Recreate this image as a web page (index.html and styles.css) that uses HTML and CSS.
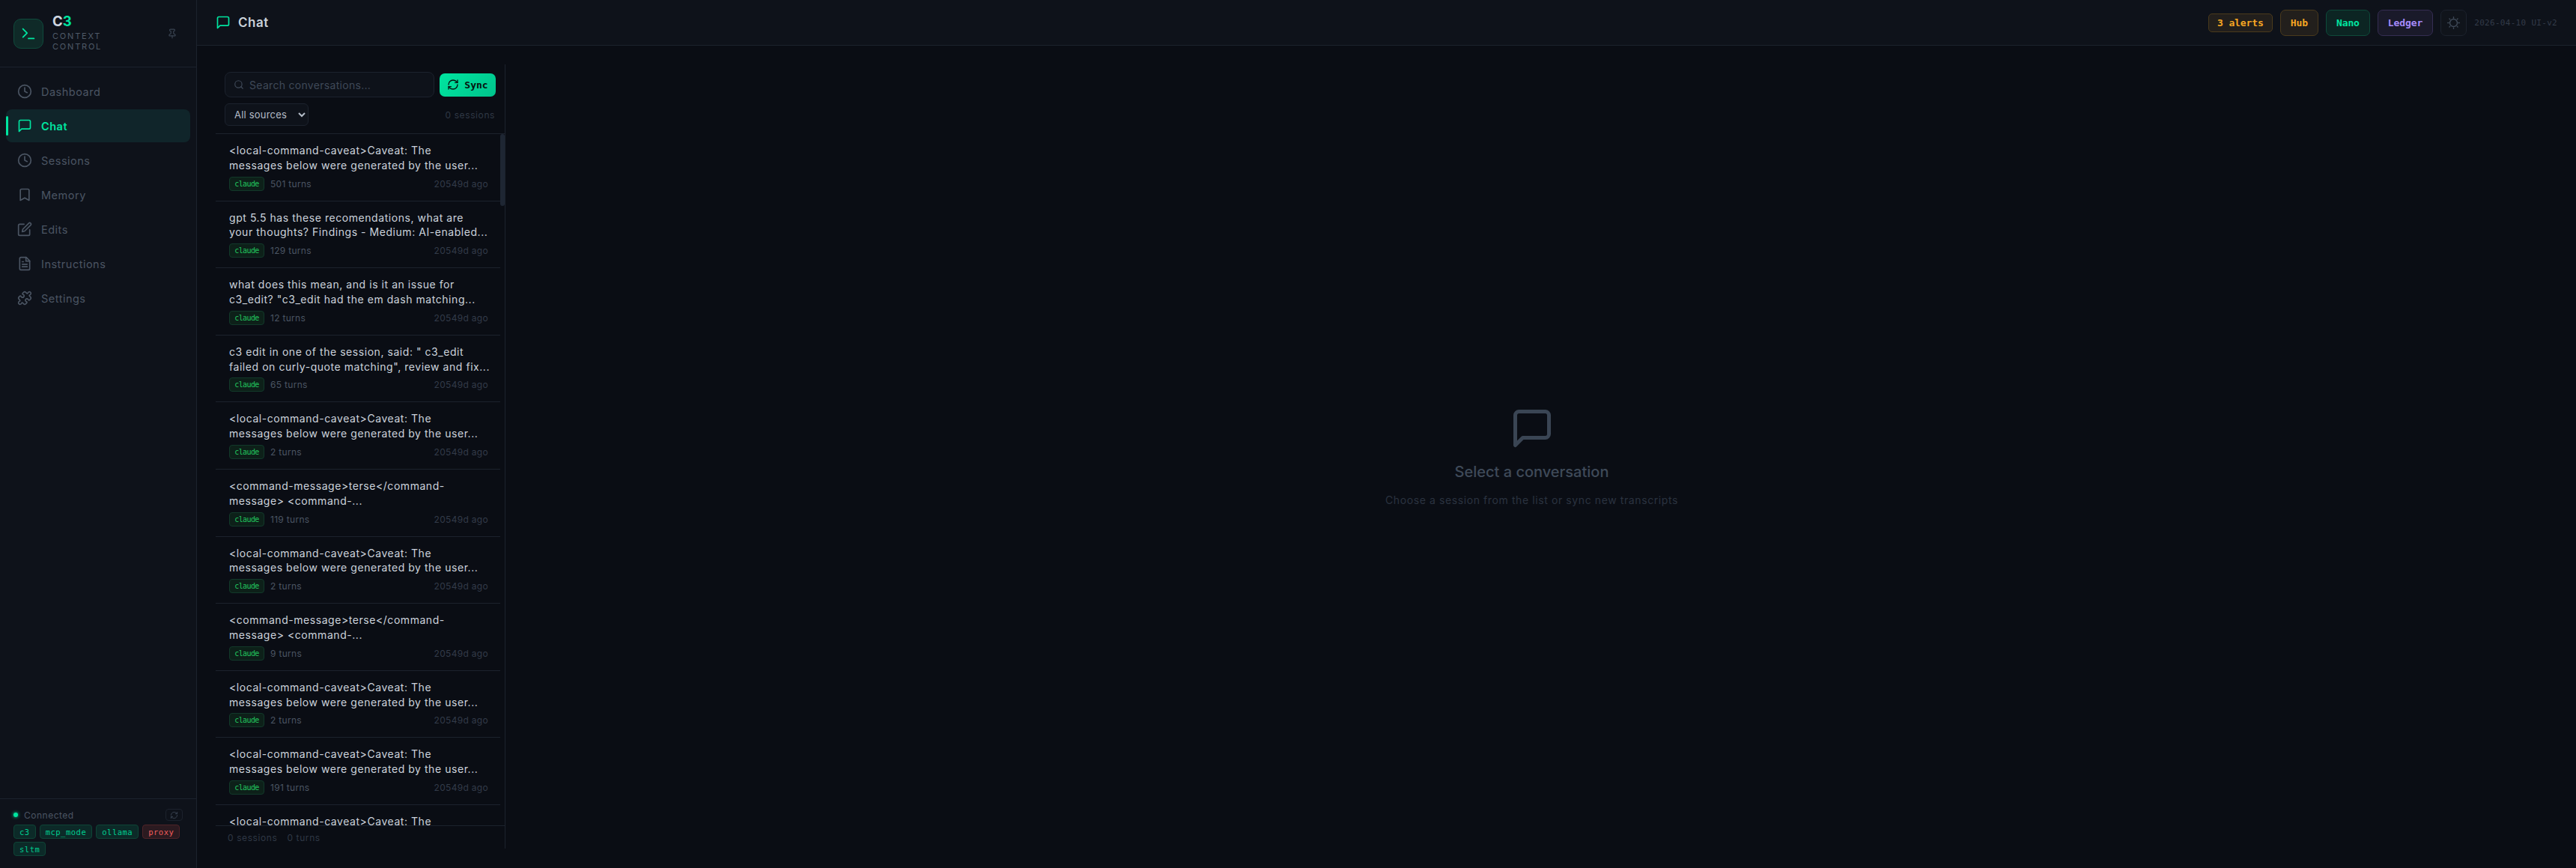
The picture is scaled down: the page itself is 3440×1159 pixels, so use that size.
FILE: index.html
```html
<!DOCTYPE html>
<html lang="en">
<head>
    <meta charset="UTF-8">
    <title>C3 - Chat</title>
    <link rel="stylesheet" href="styles.css">
</head>
<body>
    <svg class="sprite" width="0" height="0">
        <symbol id="i-clock" viewBox="0 0 24 24"><circle cx="12" cy="12" r="10"/><polyline points="12 6 12 12 16 14"/></symbol>
        <symbol id="i-chat" viewBox="0 0 24 24"><path d="M21 15a2 2 0 0 1-2 2H7l-4 4V5a2 2 0 0 1 2-2h14a2 2 0 0 1 2 2z"/></symbol>
        <symbol id="i-bookmark" viewBox="0 0 24 24"><path d="m19 21-7-4-7 4V5a2 2 0 0 1 2-2h10a2 2 0 0 1 2 2v16z"/></symbol>
        <symbol id="i-edit" viewBox="0 0 24 24"><path d="M11 4H4a2 2 0 0 0-2 2v14a2 2 0 0 0 2 2h14a2 2 0 0 0 2-2v-7"/><path d="M18.5 2.5a2.121 2.121 0 0 1 3 3L12 15l-4 1 1-4 9.5-9.5z"/></symbol>
        <symbol id="i-file" viewBox="0 0 24 24"><path d="M14.5 2H6a2 2 0 0 0-2 2v16a2 2 0 0 0 2 2h12a2 2 0 0 0 2-2V7.5L14.5 2z"/><polyline points="14 2 14 8 20 8"/><line x1="16" y1="13" x2="8" y2="13"/><line x1="16" y1="17" x2="8" y2="17"/><line x1="10" y1="9" x2="8" y2="9"/></symbol>
        <symbol id="i-puzzle" viewBox="0 0 24 24"><path d="M19.439 7.85c-.049.322.059.648.289.878l1.568 1.568c.47.47.706 1.087.706 1.704s-.235 1.233-.706 1.704l-1.611 1.611a.98.98 0 0 1-.837.276c-.47-.07-.802-.48-.968-.925a2.501 2.501 0 1 0-3.214 3.214c.446.166.855.497.925.968a.979.979 0 0 1-.276.837l-1.61 1.61a2.404 2.404 0 0 1-1.705.707 2.402 2.402 0 0 1-1.704-.706l-1.568-1.568a1.026 1.026 0 0 0-.877-.29c-.493.074-.84.504-1.02.968a2.5 2.5 0 1 1-3.237-3.237c.464-.18.894-.527.967-1.02a1.026 1.026 0 0 0-.289-.877l-1.568-1.568A2.402 2.402 0 0 1 1.998 12c0-.617.236-1.234.706-1.704L4.23 8.77c.24-.24.581-.353.917-.303.515.077.877.528 1.073 1.01a2.5 2.5 0 1 0 3.259-3.259c-.482-.196-.933-.558-1.01-1.073-.05-.336.062-.676.303-.917l1.525-1.525A2.402 2.402 0 0 1 12 1.998c.617 0 1.234.236 1.704.706l1.568 1.568c.23.23.556.338.877.29.493-.074.84-.504 1.02-.968a2.5 2.5 0 1 1 3.237 3.237c-.464.18-.894.527-.967 1.02Z"/></symbol>
        <symbol id="i-refresh" viewBox="0 0 24 24"><path d="M3 12a9 9 0 0 1 9-9 9.75 9.75 0 0 1 6.74 2.74L21 8"/><path d="M21 3v5h-5"/><path d="M21 12a9 9 0 0 1-9 9 9.75 9.75 0 0 1-6.74-2.74L3 16"/><path d="M8 16H3v5"/></symbol>
        <symbol id="i-search" viewBox="0 0 24 24"><circle cx="11" cy="11" r="8"/><path d="m21 21-4.3-4.3"/></symbol>
    </svg>

    <div class="app">
        <aside class="sidebar">
            <div class="brand">
                <div class="brand-logo">
                    <svg viewBox="0 0 24 24"><polyline points="4 17 10 11 4 5"/><line x1="12" y1="19" x2="20" y2="19"/></svg>
                </div>
                <div class="brand-text">
                    <div class="brand-name">C<span>3</span></div>
                    <div class="brand-sub">CONTEXT CONTROL</div>
                </div>
                <svg class="pin" viewBox="0 0 24 24"><path d="M12 17v5"/><path d="M9 10.76a2 2 0 0 1-1.11 1.79l-1.78.9A2 2 0 0 0 5 15.24V16a1 1 0 0 0 1 1h12a1 1 0 0 0 1-1v-.76a2 2 0 0 0-1.11-1.79l-1.78-.9A2 2 0 0 1 15 10.76V7a1 1 0 0 1 1-1 2 2 0 0 0 0-4H8a2 2 0 0 0 0 4 1 1 0 0 1 1 1z"/></svg>
            </div>
            <nav class="nav">
                <a class="nav-item"><svg class="icon"><use href="#i-clock"/></svg>Dashboard</a>
                <a class="nav-item active"><svg class="icon"><use href="#i-chat"/></svg>Chat</a>
                <a class="nav-item"><svg class="icon"><use href="#i-clock"/></svg>Sessions</a>
                <a class="nav-item"><svg class="icon"><use href="#i-bookmark"/></svg>Memory</a>
                <a class="nav-item"><svg class="icon"><use href="#i-edit"/></svg>Edits</a>
                <a class="nav-item"><svg class="icon"><use href="#i-file"/></svg>Instructions</a>
                <a class="nav-item"><svg class="icon"><use href="#i-puzzle"/></svg>Settings</a>
            </nav>
            <div class="side-foot">
                <div class="status">
                    <span class="dot"></span>
                    <span class="status-text">Connected</span>
                    <button class="reload"><svg class="icon"><use href="#i-refresh"/></svg></button>
                </div>
                <div class="tags">
                    <span class="tag">c3</span>
                    <span class="tag">mcp_mode</span>
                    <span class="tag">ollama</span>
                    <span class="tag off">proxy</span>
                    <span class="tag">sltm</span>
                </div>
            </div>
        </aside>

        <div class="main">
            <header class="topbar">
                <svg class="icon top-icon"><use href="#i-chat"/></svg>
                <h1>Chat</h1>
                <div class="top-right">
                    <span class="pill small amber">3 alerts</span>
                    <span class="pill amber">Hub</span>
                    <span class="pill green">Nano</span>
                    <span class="pill purple">Ledger</span>
                    <button class="theme">
                        <svg viewBox="0 0 24 24"><circle cx="12" cy="12" r="7"/><path d="M12 1v2M12 21v2M4.2 4.2l1 1M18.8 18.8l1 1M1 12h2M21 12h2M4.2 19.8l1-1M18.8 5.2l1-1"/></svg>
                    </button>
                    <span class="version">2026-04-10 UI-v2</span>
                </div>
            </header>

            <div class="content">
                <section class="panel">
                    <div class="toolbar">
                        <div class="search">
                            <svg class="icon"><use href="#i-search"/></svg>
                            <input type="text" placeholder="Search conversations...">
                        </div>
                        <button class="sync"><svg class="icon"><use href="#i-refresh"/></svg>Sync</button>
                    </div>
                    <div class="filter-row">
                        <select class="filter"><option>All sources</option></select>
                        <span class="count">0 sessions</span>
                    </div>
                    <div class="list">
                        <div class="thumb"></div>
                        <div class="item">
                            <div class="item-title">&lt;local-command-caveat&gt;Caveat: The<br>messages below were generated by the user...</div>
                            <div class="meta"><span class="badge">claude</span><span class="turns">501 turns</span><span class="ago">20549d ago</span></div>
                        </div>
                        <div class="item">
                            <div class="item-title">gpt 5.5 has these recomendations, what are<br>your thoughts? Findings - Medium: AI-enabled...</div>
                            <div class="meta"><span class="badge">claude</span><span class="turns">129 turns</span><span class="ago">20549d ago</span></div>
                        </div>
                        <div class="item">
                            <div class="item-title">what does this mean, and is it an issue for<br>c3_edit? "c3_edit had the em dash matching...</div>
                            <div class="meta"><span class="badge">claude</span><span class="turns">12 turns</span><span class="ago">20549d ago</span></div>
                        </div>
                        <div class="item">
                            <div class="item-title">c3 edit in one of the session, said: " c3_edit<br>failed on curly-quote matching", review and fix...</div>
                            <div class="meta"><span class="badge">claude</span><span class="turns">65 turns</span><span class="ago">20549d ago</span></div>
                        </div>
                        <div class="item">
                            <div class="item-title">&lt;local-command-caveat&gt;Caveat: The<br>messages below were generated by the user...</div>
                            <div class="meta"><span class="badge">claude</span><span class="turns">2 turns</span><span class="ago">20549d ago</span></div>
                        </div>
                        <div class="item">
                            <div class="item-title">&lt;command-message&gt;terse&lt;/command-<br>message&gt; &lt;command-...</div>
                            <div class="meta"><span class="badge">claude</span><span class="turns">119 turns</span><span class="ago">20549d ago</span></div>
                        </div>
                        <div class="item">
                            <div class="item-title">&lt;local-command-caveat&gt;Caveat: The<br>messages below were generated by the user...</div>
                            <div class="meta"><span class="badge">claude</span><span class="turns">2 turns</span><span class="ago">20549d ago</span></div>
                        </div>
                        <div class="item">
                            <div class="item-title">&lt;command-message&gt;terse&lt;/command-<br>message&gt; &lt;command-...</div>
                            <div class="meta"><span class="badge">claude</span><span class="turns">9 turns</span><span class="ago">20549d ago</span></div>
                        </div>
                        <div class="item">
                            <div class="item-title">&lt;local-command-caveat&gt;Caveat: The<br>messages below were generated by the user...</div>
                            <div class="meta"><span class="badge">claude</span><span class="turns">2 turns</span><span class="ago">20549d ago</span></div>
                        </div>
                        <div class="item">
                            <div class="item-title">&lt;local-command-caveat&gt;Caveat: The<br>messages below were generated by the user...</div>
                            <div class="meta"><span class="badge">claude</span><span class="turns">191 turns</span><span class="ago">20549d ago</span></div>
                        </div>
                        <div class="item">
                            <div class="item-title">&lt;local-command-caveat&gt;Caveat: The</div>
                        </div>
                    </div>
                    <div class="panel-foot"><span>0 sessions</span><span>0 turns</span></div>
                </section>

                <section class="empty">
                    <svg class="empty-icon" viewBox="0 0 24 24"><path d="M21 15a2 2 0 0 1-2 2H7l-4 4V5a2 2 0 0 1 2-2h14a2 2 0 0 1 2 2z"/></svg>
                    <h2>Select a conversation</h2>
                    <p>Choose a session from the list or sync new transcripts</p>
                </section>
            </div>
        </div>
    </div>
</body>
</html>
```

FILE: styles.css
```css
* {
    box-sizing: border-box;
}
html, body {
    margin: 0;
    height: 100%;
}
body {
    font-family: Inter, "Noto Sans", sans-serif;
    background-color: #0a0d14;
    color: #c9d1d9;
    overflow: hidden;
}
button, input, select {
    font-family: inherit;
}
.sprite {
    position: absolute;
}
.icon, .pin, .theme svg, .brand-logo svg, .empty-icon {
    fill: none;
    stroke: currentColor;
    stroke-width: 2;
    stroke-linecap: round;
    stroke-linejoin: round;
}
.icon {
    width: 20px;
    height: 20px;
    flex-shrink: 0;
}
.app {
    display: flex;
    height: 100vh;
}

/* sidebar */
.sidebar {
    width: 263px;
    flex-shrink: 0;
    display: flex;
    flex-direction: column;
    background-color: #0e121a;
    border-right: 1px solid #1c222d;
}
.brand {
    height: 90px;
    display: flex;
    align-items: center;
    padding: 0 25px 0 18px;
    border-bottom: 1px solid #1c222d;
}
.brand-logo {
    width: 40px;
    height: 40px;
    border-radius: 10px;
    background-color: #0f2a28;
    border: 1px solid #0f4a3c;
    color: #00e5a0;
    display: flex;
    align-items: center;
    justify-content: center;
    flex-shrink: 0;
}
.brand-logo svg {
    width: 22px;
    height: 22px;
}
.brand-text {
    margin-left: 12px;
    padding-bottom: 2px;
    flex: 1;
}
.brand-name {
    font-size: 18.5px;
    font-weight: 700;
    line-height: 20px;
    color: #cfd6e0;
}
.brand-name span {
    color: #00e5a0;
}
.brand-sub {
    font-size: 11px;
    line-height: 14px;
    letter-spacing: 1.8px;
    color: #4f5a68;
    width: 80px;
    margin-top: 3px;
}
.pin {
    width: 14px;
    height: 14px;
    color: #3a4452;
}
.nav {
    flex: 1;
    display: flex;
    flex-direction: column;
    gap: 2px;
    padding: 10px 8px;
}
.nav-item {
    position: relative;
    height: 44px;
    display: flex;
    align-items: center;
    gap: 12px;
    padding-left: 15px;
    border-radius: 8px;
    font-size: 14.5px;
    letter-spacing: .5px;
    color: #4b5563;
}
.nav-item.active {
    background-color: #10252a;
    color: #00e5a0;
    font-weight: 600;
}
.nav-item.active::before {
    content: "";
    position: absolute;
    left: 0;
    top: 9px;
    width: 3px;
    height: 26px;
    border-radius: 2px;
    background-color: #00e5a0;
}
.side-foot {
    border-top: 1px solid #1c222d;
    padding: 13px 18px 16px;
}
.status {
    display: flex;
    align-items: center;
    height: 16px;
}
.dot {
    width: 6px;
    height: 6px;
    border-radius: 50%;
    background-color: #00e5a0;
    box-shadow: 0 0 4px #00e5a0;
}
.status-text {
    margin-left: 8px;
    flex: 1;
    font-size: 12px;
    letter-spacing: .5px;
    color: #4b5563;
}
.reload {
    width: 23px;
    height: 16px;
    padding: 0;
    display: flex;
    align-items: center;
    justify-content: center;
    background: none;
    border: 1px solid #1c222d;
    border-radius: 4px;
    color: #3a4452;
}
.reload .icon {
    width: 11px;
    height: 11px;
}
.tags {
    display: flex;
    flex-wrap: wrap;
    gap: 4px 5px;
    margin-top: 5px;
}
.tag {
    height: 19px;
    padding: 0 7px;
    display: flex;
    align-items: center;
    font-family: "DejaVu Sans Mono", monospace;
    font-size: 10.5px;
    letter-spacing: .5px;
    color: #00cf91;
    background-color: #0c2a28;
    border: 1px solid #0e4436;
    border-radius: 4px;
}
.tag.off {
    color: #f05d5d;
    background-color: #2b1a20;
    border-color: #4f2328;
}

/* top bar */
.main {
    flex: 1;
    min-width: 0;
    display: flex;
    flex-direction: column;
}
.topbar {
    height: 61px;
    flex-shrink: 0;
    display: flex;
    align-items: center;
    padding: 0 25px;
    background-color: #0e121a;
    border-bottom: 1px solid #1c222d;
}
.top-icon {
    color: #00e5a0;
}
.topbar h1 {
    margin: 0 0 0 10px;
    font-size: 17px;
    font-weight: 600;
    letter-spacing: .5px;
    color: #c9d1d9;
}
.top-right {
    margin-left: auto;
    display: flex;
    align-items: center;
    gap: 10px;
}
.pill {
    height: 35px;
    padding: 0 13px;
    display: flex;
    align-items: center;
    font-family: "DejaVu Sans Mono", monospace;
    font-size: 13px;
    font-weight: 700;
    letter-spacing: -.1px;
    border: 1px solid;
    border-radius: 7px;
}
.pill.small {
    height: 25px;
    padding: 0 11px;
    border-radius: 5px;
}
.amber {
    color: #f5a623;
    background-color: #221f1c;
    border-color: #4a3a1c;
}
.green {
    color: #00e5a0;
    background-color: #0c2523;
    border-color: #0e4a3a;
}
.purple {
    color: #a78bfa;
    background-color: #1a1a2a;
    border-color: #352d52;
}
.theme {
    width: 35px;
    height: 35px;
    padding: 0;
    display: flex;
    align-items: center;
    justify-content: center;
    background-color: #10141b;
    border: 1px solid #1c222d;
    border-radius: 7px;
    color: #3f4a58;
}
.theme svg {
    width: 17px;
    height: 17px;
}
.version {
    font-family: "DejaVu Sans Mono", monospace;
    font-size: 11px;
    letter-spacing: .3px;
    color: #333b49;
}

/* chat list */
.content {
    flex: 1;
    min-height: 0;
    display: flex;
    padding: 25px 24px 26px 25px;
}
.panel {
    width: 387px;
    flex-shrink: 0;
    display: flex;
    flex-direction: column;
    border-right: 1px solid #1c222d;
}
.toolbar {
    display: flex;
    align-items: center;
    gap: 7px;
    padding: 10px 12px 0;
}
.search {
    flex: 1;
    height: 34px;
    display: flex;
    align-items: center;
    gap: 7px;
    padding: 0 11px;
    background-color: #0e121a;
    border: 1px solid #1c222d;
    border-radius: 8px;
    color: #3f4958;
}
.search .icon {
    width: 14px;
    height: 14px;
}
.search input {
    flex: 1;
    min-width: 0;
    background: none;
    border: none;
    outline: none;
    padding: 0;
    font-size: 14px;
    letter-spacing: .3px;
    color: #c9d1d9;
}
.search input::placeholder {
    color: #3f4958;
    opacity: 1;
}
.sync {
    width: 75px;
    height: 31px;
    padding: 0;
    display: flex;
    align-items: center;
    justify-content: center;
    gap: 7px;
    border: none;
    border-radius: 7px;
    background: linear-gradient(135deg, #00e5a0, #00c48c);
    color: #07130f;
    font-family: "DejaVu Sans Mono", monospace;
    font-size: 13px;
    font-weight: 700;
}
.sync .icon {
    width: 16px;
    height: 16px;
}
.filter-row {
    display: flex;
    align-items: center;
    justify-content: space-between;
    padding: 8px 13px 10px 12px;
}
.filter {
    width: 112px;
    height: 30px;
    padding: 0 8px;
    background-color: #0e121a;
    border: 1px solid #1c222d;
    border-radius: 6px;
    color: #b4bcc7;
    font-size: 13px;
    letter-spacing: .2px;
}
.count {
    font-size: 12px;
    letter-spacing: .6px;
    color: #2f3845;
}
.list {
    position: relative;
    flex: 1;
    min-height: 0;
    overflow: hidden;
    padding-right: 6px;
    border-top: 1px solid #1c222d;
}
.thumb {
    position: absolute;
    top: 0;
    right: 0;
    width: 6px;
    height: 96px;
    border-radius: 3px;
    background-color: #1e2633;
}
.item {
    padding: 12px 16px 13px 18px;
    border-bottom: 1px solid #1c222d;
}
.item-title {
    font-size: 14px;
    line-height: 19.8px;
    letter-spacing: .55px;
    color: #ccd3dc;
    white-space: nowrap;
}
.meta {
    display: flex;
    align-items: center;
    height: 19px;
    margin-top: 5px;
}
.badge {
    width: 47px;
    height: 19px;
    display: flex;
    align-items: center;
    justify-content: center;
    font-family: "DejaVu Sans Mono", monospace;
    font-size: 10px;
    letter-spacing: -.6px;
    color: #22c55e;
    background-color: #0d2019;
    border: 1px solid #12392a;
    border-radius: 4px;
}
.turns {
    margin-left: 8px;
    font-size: 12px;
    letter-spacing: .3px;
    color: #4b5563;
}
.ago {
    margin-left: auto;
    font-size: 12px;
    letter-spacing: .3px;
    color: #333b49;
}
.panel-foot {
    height: 31px;
    flex-shrink: 0;
    display: flex;
    align-items: center;
    gap: 13px;
    padding-left: 16px;
    border-top: 1px solid #1c222d;
    font-size: 12px;
    letter-spacing: .6px;
    color: #2f3845;
}

/* empty state */
.empty {
    flex: 1;
    display: flex;
    flex-direction: column;
    align-items: center;
    justify-content: center;
}
.empty-icon {
    width: 60px;
    height: 60px;
    color: #3a4554;
}
.empty h2 {
    margin: 14px 0 0;
    font-size: 20px;
    font-weight: 500;
    line-height: 28px;
    color: #3f4a59;
}
.empty p {
    margin: 15px 0 0;
    font-size: 14px;
    line-height: 18px;
    letter-spacing: .6px;
    color: #2b3340;
}
```
